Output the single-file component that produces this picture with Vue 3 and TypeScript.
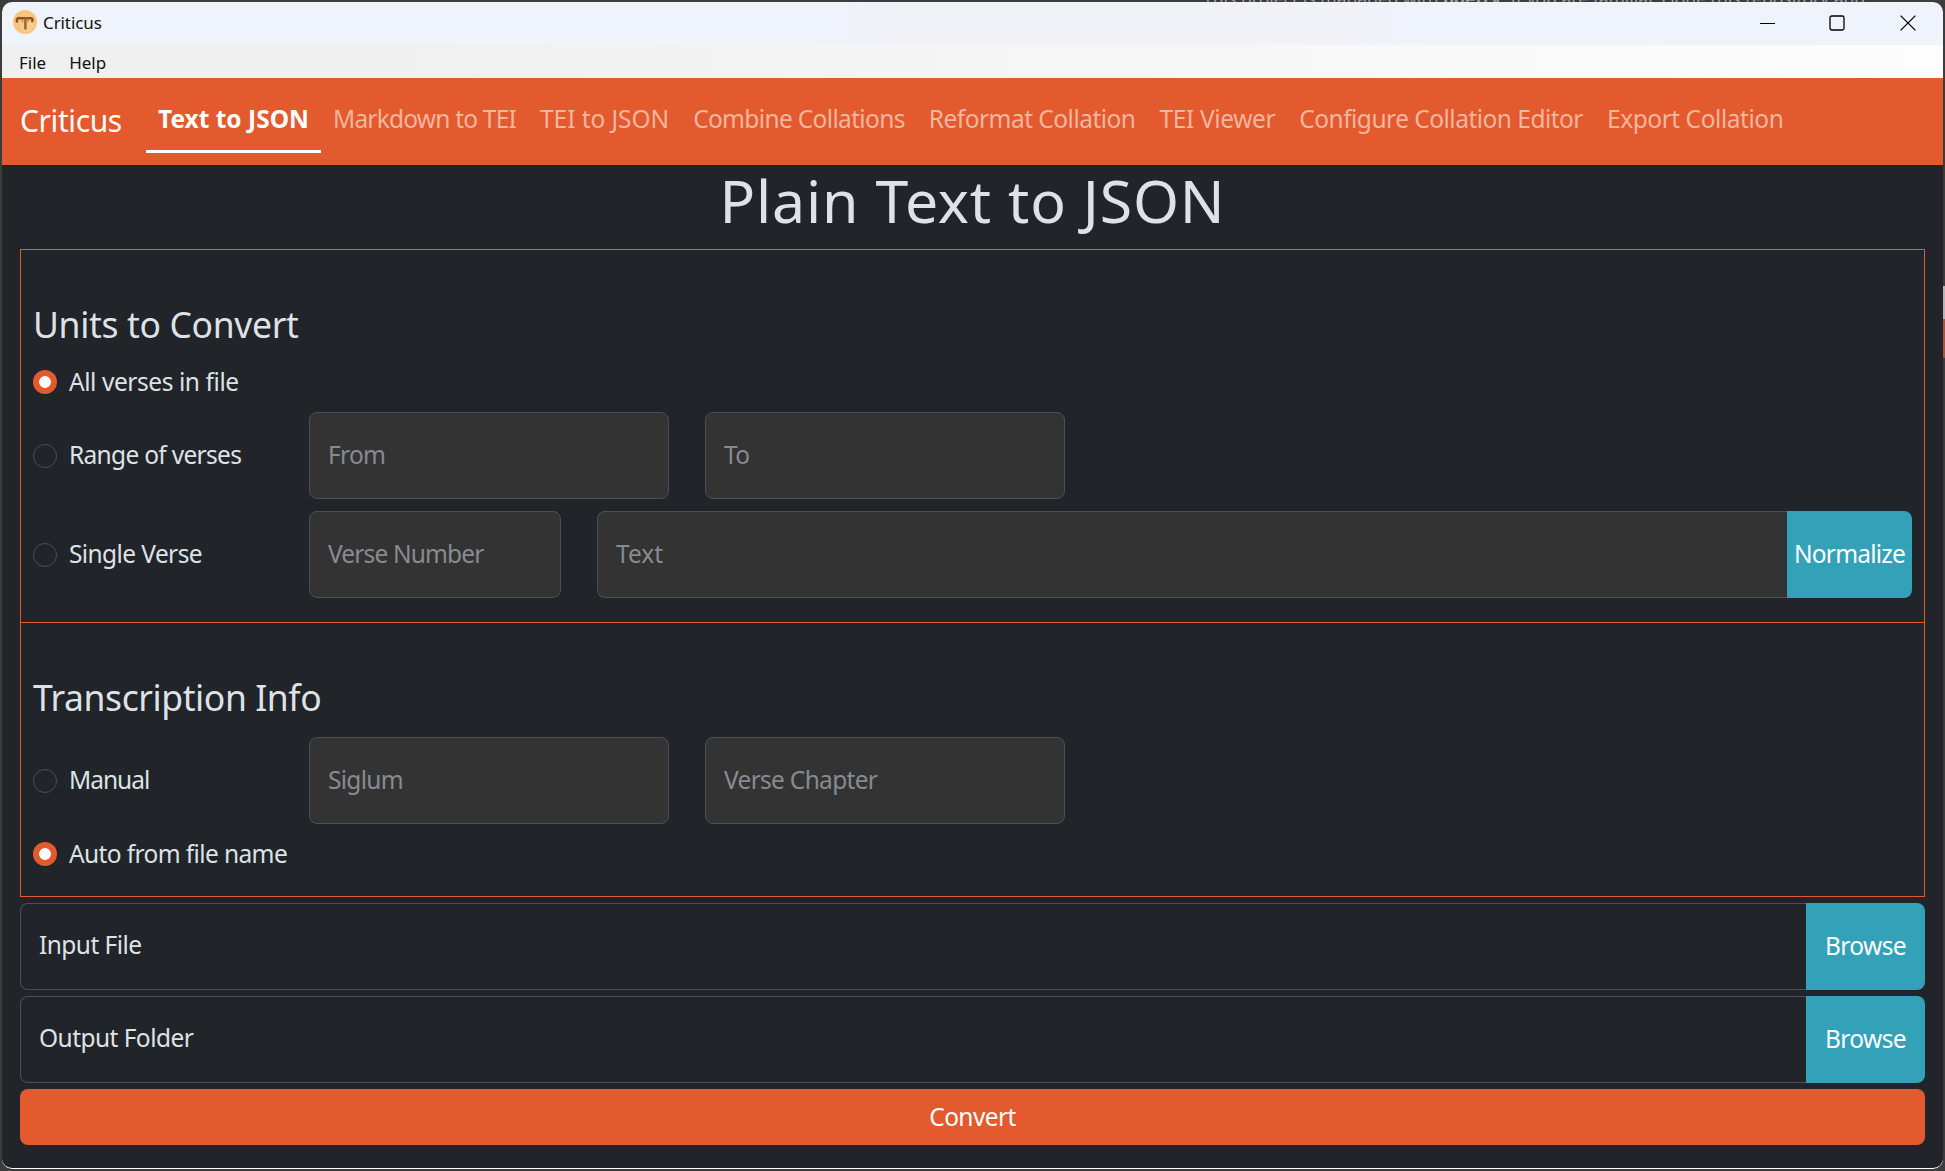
<script setup lang="ts">
import { ref } from 'vue'

interface Tab {
  name: string
  tracking: number
}

const tabs: Tab[] = [
  { name: 'Text to JSON', tracking: 0 },
  { name: 'Markdown to TEI', tracking: -0.79 },
  { name: 'TEI to JSON', tracking: -0.07 },
  { name: 'Combine Collations', tracking: -0.66 },
  { name: 'Reformat Collation', tracking: -0.52 },
  { name: 'TEI Viewer', tracking: -0.37 },
  { name: 'Configure Collation Editor', tracking: -0.52 },
  { name: 'Export Collation', tracking: -0.45 },
]

const active = ref('Text to JSON')
const units = ref('all')
const info = ref('auto')
const paths = ['Input File', 'Output Folder']
</script>

<template>
  <div class="desktop">
    <div class="behind">This project is managed with <b>poetry</b>. If you are familiar, clone this repository and</div>
    <i class="edge pale"></i>
    <i class="edge rust"></i>
    <div class="window">
      <header class="titlebar">
        <svg class="logo" width="24" height="24" viewBox="0 0 24 24">
          <circle cx="12" cy="12" r="12" fill="#f8c581" />
          <circle cx="14" cy="15" r="7" fill="#fbd193" opacity=".6" />
          <path d="M4 11.500C3 9 4.500 7.800 7 8.200l11 .1c1.500 0 2 1.200 1.200 2.800" fill="none" stroke="#8b5424" stroke-width="2.500" stroke-linecap="round" />
          <path d="M12.400 9v9.500" fill="none" stroke="#a4682f" stroke-width="2.600" stroke-linecap="round" />
          <path d="M9.500 10v2.500M15.500 10l-1 2" fill="none" stroke="#c08a4c" stroke-width="1.300" />
        </svg>
        <span class="app-name">Criticus</span>
        <div class="controls">
          <svg width="15" height="16" viewBox="0 0 15 16"><path d="M0 8.500h15" stroke="#000" stroke-width="1" /></svg>
          <svg width="16" height="16" viewBox="0 0 16 16"><rect x="1" y="1" width="14" height="14" rx="1.800" fill="none" stroke="#000" stroke-width="1.300" /></svg>
          <svg width="16" height="16" viewBox="0 0 16 16"><path d="M.6.6l14.800 14.800M15.400.6L.6 15.400" stroke="#000" stroke-width="1.300" /></svg>
        </div>
      </header>
      <div class="menubar"><span>File</span><span>Help</span></div>
      <nav class="navbar">
        <span class="brand">Criticus</span>
        <a
          v-for="tab in tabs"
          :key="tab.name"
          class="tab"
          :class="{ active: tab.name === active }"
          :style="{ letterSpacing: tab.tracking + 'px' }"
          @click="active = tab.name"
        >{{ tab.name }}</a>
      </nav>

      <main class="page">
        <h1>Plain Text to JSON</h1>

        <section class="panel units">
          <h2>Units to Convert</h2>
          <label class="row short all">
            <input v-model="units" type="radio" value="all" /><span>All verses in file</span>
          </label>
          <div class="row">
            <label class="choice range"><input v-model="units" type="radio" value="range" /><span>Range of verses</span></label>
            <input class="field" placeholder="From" />
            <input class="field" placeholder="To" />
          </div>
          <div class="row">
            <label class="choice"><input v-model="units" type="radio" value="single" /><span>Single Verse</span></label>
            <input class="field narrow" placeholder="Verse Number" />
            <div class="group">
              <input class="field text" placeholder="Text" />
              <button class="info normalize">Normalize</button>
            </div>
          </div>
        </section>

        <section class="panel transcription">
          <h2>Transcription Info</h2>
          <div class="row">
            <label class="choice manual"><input v-model="info" type="radio" value="manual" /><span>Manual</span></label>
            <input class="field" placeholder="Siglum" />
            <input class="field" placeholder="Verse Chapter" />
          </div>
          <label class="row short auto">
            <input v-model="info" type="radio" value="auto" /><span>Auto from file name</span>
          </label>
        </section>

        <div v-for="path in paths" :key="path" class="path">
          <div class="path-text">{{ path }}</div>
          <button class="info">Browse</button>
        </div>
        <button class="convert">Convert</button>
      </main>
    </div>
  </div>
</template>

<style>
body {
  background: #3a3a3b;
}
</style>

<style scoped>
* {
  box-sizing: border-box;
}
.desktop {
  position: relative;
  width: 1945px;
  height: 1171px;
  padding: 2px;
  overflow: hidden;
  background: #3c3c3d;
  font-family: "Noto Sans", sans-serif;
}
.behind {
  position: absolute;
  top: -10px;
  left: 1203px;
  height: 17px;
  line-height: 17px;
  font-size: 17.5px;
  white-space: nowrap;
  color: #a0a0a0;
}
.edge {
  position: absolute;
  right: 0;
  width: 2px;
}
.pale {
  top: 286px;
  height: 33px;
  background: #b5b5b5;
}
.rust {
  top: 319px;
  height: 39px;
  background: #a5543a;
}
.window {
  position: relative;
  width: 1941px;
  height: 1167px;
  display: flex;
  flex-direction: column;
  overflow: hidden;
  border-radius: 10px;
  border-bottom: 1px solid #fff;
  background: #212429;
}
.titlebar {
  height: 43px;
  flex: none;
  display: flex;
  align-items: center;
  padding: 0 27px 2px 11px;
  background: linear-gradient(90deg, #eff3fb 0 42%, #f1f2f7 48% 68%, #eff3fb 73%);
}
.logo {
  margin-top: -1px;
}
.app-name {
  margin-left: 6px;
  font-size: 17px;
  letter-spacing: -0.1px;
  color: #111;
}
.controls {
  margin-left: auto;
  display: flex;
  align-items: center;
  gap: 55px;
}
.controls svg:first-child {
  margin-right: -1px;
}
.menubar {
  height: 33px;
  flex: none;
  display: flex;
  align-items: center;
  gap: 23px;
  padding: 1px 17px 0;
  background: linear-gradient(90deg, #f0f0f0 20%, #fdfdfd);
  font-size: 17px;
  color: #111;
}
.navbar {
  height: 87px;
  flex: none;
  display: flex;
  align-items: flex-start;
  padding-left: 18px;
  background: #e35a2e;
}
.brand {
  width: 126px;
  line-height: 86px;
  font-size: 30px;
  letter-spacing: -0.4px;
  color: #fff;
}
.tab {
  margin-top: 13px;
  height: 62px;
  padding: 0 12px;
  line-height: 56px;
  font-size: 24.5px;
  white-space: nowrap;
  color: #f5b59f;
  cursor: pointer;
}
.tab.active {
  border-bottom: 3px solid #fff;
  font-weight: 700;
  color: #fff;
}
.page {
  flex: 1;
  display: flex;
  flex-direction: column;
  padding: 0 18px;
  color: #dee2e6;
  font-size: 24.5px;
}
h1 {
  margin: 0;
  height: 84px;
  line-height: 70px;
  font-size: 59px;
  font-weight: 400;
  letter-spacing: 0.8px;
  text-align: center;
}
.panel {
  padding: 0 12px;
  border: 1px solid #e35a2e;
}
.units {
  height: 374px;
}
.transcription {
  height: 274px;
  border-top: 0;
  margin-bottom: 6px;
}
h2 {
  margin: 0;
  font-size: 35.5px;
  font-weight: 400;
  line-height: 50px;
}
.units h2 {
  padding-top: 49px;
  letter-spacing: -0.35px;
}
.transcription h2 {
  padding: 49px 0 15px;
  letter-spacing: -0.42px;
}
.row {
  display: flex;
  align-items: center;
  height: 87px;
  margin-bottom: 12px;
}
.short {
  height: 36px;
}
.all {
  margin: 15px 0 12px;
  letter-spacing: -0.43px;
}
.auto {
  letter-spacing: -0.62px;
}
.choice {
  width: 276px;
  display: flex;
  align-items: center;
  letter-spacing: -0.6px;
}
.range {
  letter-spacing: -0.7px;
}
.manual {
  letter-spacing: -1px;
}
.row span {
  margin-top: -2px;
}
input[type='radio'] {
  appearance: none;
  width: 24px;
  height: 24px;
  margin: 0 12px 0 0;
  border: 1px solid #495057;
  border-radius: 50%;
  flex: none;
}
input[type='radio']:checked {
  border: 0;
  background: radial-gradient(circle, #fff 0 5.500px, #e35a2e 6.200px);
}
.field {
  width: 360px;
  height: 87px;
  margin: 0 36px 0 0;
  padding: 0 18px 3px;
  border: 1px solid #495057;
  border-radius: 8px;
  outline: 0;
  background: #333;
  color: #dee2e6;
  font: inherit;
  letter-spacing: -0.7px;
}
.field::placeholder {
  color: #868b91;
  opacity: 1;
}
.narrow {
  width: 252px;
  letter-spacing: -0.85px;
}
.group {
  flex: 1;
  display: flex;
}
.text {
  flex: 1;
  width: 0;
  margin: 0;
  border-right: 0;
  border-radius: 8px 0 0 8px;
  letter-spacing: 0;
}
button {
  border: 0;
  padding: 0 0 2px;
  font: inherit;
  color: #fff;
}
.info {
  width: 119px;
  height: 87px;
  border-radius: 0 8px 8px 0;
  background: #33a1b7;
  letter-spacing: -0.6px;
}
.normalize {
  width: 125px;
  letter-spacing: -0.8px;
}
.path {
  display: flex;
  margin-bottom: 6px;
}
.path-text {
  flex: 1;
  height: 87px;
  padding-left: 18px;
  border: 1px solid #495057;
  border-right: 0;
  border-radius: 8px 0 0 8px;
  line-height: 82px;
  letter-spacing: -0.55px;
}
.convert {
  height: 56px;
  border-radius: 8px;
  background: #e35a2e;
  letter-spacing: -0.6px;
}
</style>
